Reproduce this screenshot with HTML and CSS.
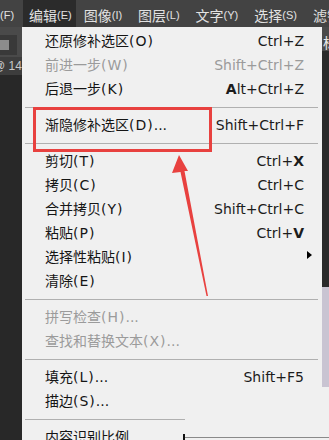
FILE: index.html
```html
<!DOCTYPE html>
<html lang="zh">
<head>
<meta charset="utf-8">
<link rel="stylesheet" href="styles.css">
</head>
<body>
<div class="app">
  <div class="menubar">
    <span class="mi first"><span class="m">(F)</span></span>
    <span class="mi active">编辑<span class="m">(E)</span></span>
    <span class="mi">图像<span class="m">(I)</span></span>
    <span class="mi">图层<span class="m">(L)</span></span>
    <span class="mi">文字<span class="m">(Y)</span></span>
    <span class="mi">选择<span class="m">(S)</span></span>
    <span class="mi">滤镜</span>
  </div>
  <div class="workspace">
    <div class="leftpanel">
      <div class="lp-top"></div>
      <div class="lp-tool"><div class="lp-box"><div class="lp-sq"></div></div></div>
      <div class="lp-tab">@ 14</div>
      <div class="lp-dark"></div>
    </div>
    <div class="menu">
      <div class="row"><span class="label">还原修补选区<span class="m">(O)</span></span><span class="key">Ctrl+Z</span></div>
      <div class="row disabled"><span class="label">前进一步<span class="m">(W)</span></span><span class="key">Shift+Ctrl+Z</span></div>
      <div class="row"><span class="label">后退一步<span class="m">(K)</span></span><span class="key"><b>A</b>lt+Ctrl+Z</span></div>
      <div class="sep"><div class="line"></div></div>
      <div class="row"><span class="label">渐隐修补选区<span class="m">(D)</span>...</span><span class="key">Shift+Ctrl+F</span></div>
      <div class="sep"><div class="line"></div></div>
      <div class="row"><span class="label">剪切<span class="m">(T)</span></span><span class="key">Ctrl+<b>X</b></span></div>
      <div class="row"><span class="label">拷贝<span class="m">(C)</span></span><span class="key">Ctrl+C</span></div>
      <div class="row"><span class="label">合并拷贝<span class="m">(Y)</span></span><span class="key">Shift+Ctrl+C</span></div>
      <div class="row"><span class="label">粘贴<span class="m">(P)</span></span><span class="key">Ctrl+<b>V</b></span></div>
      <div class="row"><span class="label">选择性粘贴<span class="m">(I)</span></span><span class="sub"></span></div>
      <div class="row"><span class="label">清除<span class="m">(E)</span></span></div>
      <div class="sep"><div class="line"></div></div>
      <div class="row disabled"><span class="label">拼写检查<span class="m">(H)</span>...</span></div>
      <div class="row disabled"><span class="label">查找和替换文本<span class="m">(X)</span>...</span></div>
      <div class="sep"><div class="line"></div></div>
      <div class="row"><span class="label">填充<span class="m">(L)</span>...</span><span class="key">Shift+F5</span></div>
      <div class="row"><span class="label">描边<span class="m">(S)</span>...</span></div>
      <div class="sep short"><div class="line"></div></div>
      <div class="row"><span class="label">内容识别比例</span></div>
    </div>
    <div class="rightpanel">
      <div class="rp-top"></div>
      <div class="rp-tab">标</div>
      <div class="rp-dark"></div>
      <div class="rp-lav"></div>
      <div class="rp-light"></div>
    </div>
  </div>
  <div class="highlight"></div>
  <svg class="arrow" width="329" height="440" viewBox="0 0 329 440">
    <polygon points="179,155 188,171 184.5,171 208,296 206.5,296 180.5,172 172,173" fill="#e8413f"/>
  </svg>
  <div class="overlay-line"></div>
  <div class="cursor"></div>
</div>
</body>
</html>
```

FILE: styles.css
```css
html, body {
  margin: 0;
  padding: 0;
}

body {
  background: #2a2a2a;
}

.app {
  position: relative;
  width: 329px;
  height: 440px;
  overflow: hidden;
  font-family: "DejaVu Sans", "Noto Sans CJK SC", sans-serif;
}

/* ---------- menu bar ---------- */
.menubar {
  display: flex;
  height: 27px;
  background: #434343;
  color: #e2e2e2;
  font-family: "Noto Sans CJK SC", sans-serif;
  font-size: 14px;
  white-space: nowrap;
}

.mi {
  display: flex;
  align-items: center;
  padding: 3px 8px 0 8px;
  line-height: 24px;
}

.mi .m {
  font-family: "Liberation Sans", sans-serif;
  font-size: 11px;
}

.mi.first {
  padding-left: 0;
  padding-right: 9px;
}

.mi.active {
  background: #2b2b2b;
  padding-left: 6px;
  padding-right: 4px;
}

/* ---------- workspace ---------- */
.workspace {
  display: flex;
  height: 413px;
}

.leftpanel {
  width: 22px;
  display: flex;
  flex-direction: column;
  overflow: hidden;
}

.lp-top {
  height: 6px;
  background: #4a4a4a;
}

.lp-tool {
  height: 24px;
  background: #4a4a4a;
  display: flex;
  align-items: center;
}

.lp-box {
  width: 17px;
  height: 20px;
  background: #393939;
  display: flex;
  align-items: center;
}

.lp-sq {
  width: 9px;
  height: 10px;
  background: #8c8c8c;
}

.lp-tab {
  height: 18px;
  background: #3d3d3d;
  color: #c8c8c8;
  font-family: "Liberation Sans", sans-serif;
  font-size: 12px;
  line-height: 18px;
  white-space: nowrap;
  margin-left: -7px;
}

.lp-dark {
  flex: 1;
  background: #282828;
}

/* ---------- dropdown ---------- */
.menu {
  width: 300px;
  background: #f0f0f0;
  padding-top: 2px;
  color: #151515;
  font-size: 14px;
}

.row {
  height: 24px;
  display: flex;
  align-items: center;
  justify-content: space-between;
  padding: 0 18px 0 23px;
  line-height: 24px;
  white-space: nowrap;
}

.row .m {
  letter-spacing: 1px;
}

.row .key {
  font-family: "DejaVu Sans", sans-serif;
  font-size: 14px;
  color: #1c1c1c;
}

.row .key b {
  font-weight: bold;
}

.row.disabled {
  color: #9b9b9b;
}

.row.disabled .key {
  color: #9b9b9b;
}

.sub {
  width: 0;
  height: 0;
  border-left: 5px solid #000;
  border-top: 4px solid transparent;
  border-bottom: 4px solid transparent;
  margin-right: -8px;
  margin-top: -5px;
}

.sep {
  height: 12px;
  display: flex;
  align-items: center;
  padding: 0 4px 0 3px;
}

.sep .line {
  flex: 1;
  height: 1px;
  background: #b0b0b0;
}

.sep.short .line {
  flex: none;
  width: 160px;
}

/* ---------- right panel ---------- */
.rightpanel {
  width: 7px;
  display: flex;
  flex-direction: column;
  overflow: hidden;
}

.rp-top {
  height: 6px;
  background: #4a4a4a;
}

.rp-tab {
  height: 18px;
  background: #4a4a4a;
  color: #e8e8e8;
  font-family: "Noto Sans CJK SC", sans-serif;
  font-size: 14px;
  line-height: 18px;
  padding-left: 1px;
  white-space: nowrap;
}

.rp-dark {
  height: 236px;
  background: #2a2a2a;
}

.rp-lav {
  height: 100px;
  background: #c9c4d2;
}

.rp-light {
  flex: 1;
  background: #f0f0f0;
}

/* ---------- overlays ---------- */
.highlight {
  position: absolute;
  left: 33px;
  top: 107px;
  width: 173px;
  height: 39px;
  border: 3px solid #e8413f;
}

.arrow {
  position: absolute;
  left: 0;
  top: 0;
}

.overlay-line {
  position: absolute;
  left: 184px;
  top: 437px;
  width: 145px;
  height: 1px;
  background: #8a8a8a;
}

.cursor {
  position: absolute;
  left: 183px;
  top: 434px;
  width: 2px;
  height: 6px;
  background: #111;
}
```
